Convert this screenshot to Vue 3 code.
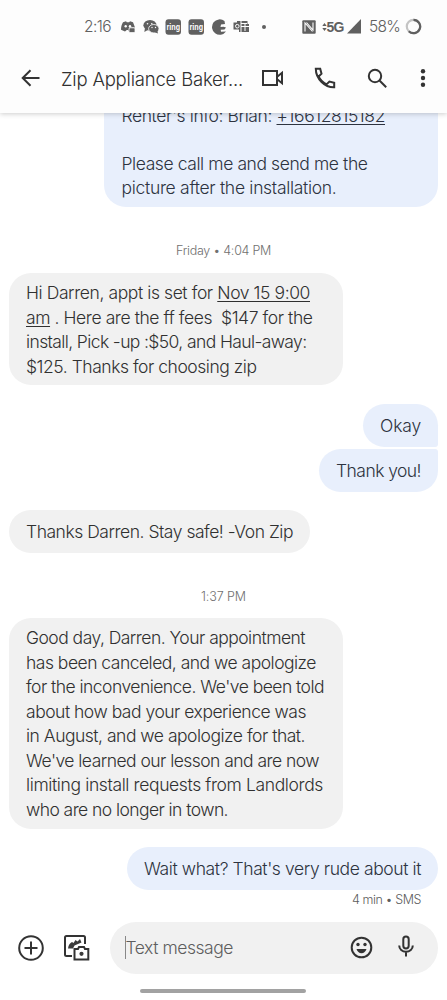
<script setup>
// Sets the tracking of a line so that it spans the given width in pixels.
const vFit = {
  mounted(el, { value }) {
    el.style.letterSpacing = '0px'
    const natural = el.getBoundingClientRect().width
    const count = el.textContent.length
    el.style.letterSpacing = (value - natural) / count + 'px'
  },
}

const appointment = [
  { w: 284, parts: [{ t: 'Hi Darren, appt is set for ' }, { t: 'Nov 15 9:00', u: true }] },
  { w: 286.5, parts: [{ t: 'am', u: true }, { t: ' . Here are the ff fees\u00a0 $147 for the' }] },
  { w: 280.5, parts: [{ t: 'install, Pick -up :$50, and Haul-away:' }] },
  { w: 230.5, parts: [{ t: '$125. Thanks for choosing zip' }] },
]

const cancellation = [
  { w: 279, t: 'Good day, Darren. Your appointment' },
  { w: 290, t: 'has been canceled, and we apologize' },
  { w: 298, t: "for the inconvenience. We've been told" },
  { w: 280, t: 'about how bad your experience was' },
  { w: 279, t: 'in August, and we apologize for that.' },
  { w: 293, t: "We've learned our lesson and are now" },
  { w: 297, t: 'limiting install requests from Landlords' },
  { w: 202, t: 'who are no longer in town.' },
]
</script>

<template>
  <div class="phone">
    <header class="top">
      <div class="status">
        <span v-fit="27" class="clock">2:16</span>
        <svg class="apps" width="132" height="18" viewBox="0 0 132 18">
          <g fill="#606060">
            <path d="M3 4.200 6 3.300l.8 1h2.400l.8-1 3 .9 2 5.200H9v4l-.8-1.500H6.800L5 13.500l-4-1.700c0-3 .6-5.400 2-7.600Z" />
            <circle cx="5.700" cy="8.200" r="1.200" fill="#fdfdfd" /><circle cx="10" cy="8.200" r="1.200" fill="#fdfdfd" />
            <rect x="9" y="9.800" width="6" height="4.800" rx="1" stroke="#fdfdfd" stroke-width=".8" />
            <ellipse cx="30" cy="7.300" rx="6.600" ry="5.400" /><path d="m25 10-.7 4 3.500-2Z" />
            <ellipse cx="33.800" cy="10.700" rx="5.200" ry="4.200" stroke="#fdfdfd" stroke-width=".8" /><path d="m34 14 4 1.500-.7-3Z" />
            <g fill="#fdfdfd"><circle cx="27.500" cy="5.700" r=".8" /><circle cx="31.800" cy="5.700" r=".8" /><circle cx="32" cy="9.500" r=".7" /><circle cx="35.500" cy="9.500" r=".7" /></g>
            <rect x="45.500" y="1.300" width="15.500" height="15.500" rx="3" />
            <rect x="68.500" y="1.300" width="15.500" height="15.500" rx="3" />
            <path d="M104.500 3A7.700 7.700 0 1 0 106 13.500l-5 .3-.3-2 3.800-.3 1.500-2-2.500-.8-3 .3.500-2.500 4-.5Z" />
            <path d="M117 3h10.500v3h1.500V14H119v-2.500h-5.500V4.500H117Z" />
          </g>
          <g fill="none" stroke="#fdfdfd" stroke-width="1"><circle cx="117.300" cy="8.200" r="1.800" /><path d="M121 3v11M121 8.500h8M125 5v8M121 5.500h6" /></g>
          <text x="46.500" y="11.500" class="ring" textLength="13.500" lengthAdjust="spacingAndGlyphs">ring</text>
          <text x="69.500" y="11.500" class="ring" textLength="13.500" lengthAdjust="spacingAndGlyphs">ring</text>
        </svg>
        <i class="dot"></i>
        <svg class="nfc" width="14" height="14" viewBox="0 0 14 14"><rect x=".3" y=".3" width="13.400" height="13.400" rx="1" fill="#606060" /><path d="M3 11.500V3l7.500 8.500M4.500 2.500 11 10V2.500" fill="none" stroke="#fdfdfd" stroke-width="1.100" /></svg>
        <svg class="updown" width="5" height="8" viewBox="0 0 5 8"><path d="M.3 3 2.500 0l2.200 3ZM.3 5l2.200 3 2.200-3Z" fill="#606060" /></svg>
        <b v-fit="17" class="net">5G</b>
        <svg class="signal" width="15" height="15" viewBox="0 0 15 15"><path d="M0 14.500 14 0v14.500Z" fill="#606060" /></svg>
        <span v-fit="31" class="battery">58%</span>
        <svg class="gauge" width="17" height="17" viewBox="0 0 17 17" fill="none" stroke-width="2.200"><circle cx="8.500" cy="8.500" r="6.700" stroke="#c4c4c4" /><path d="M8.500 1.800a6.700 6.700 0 1 1-4.700 11.500" stroke="#606060" /></svg>
      </div>
      <div class="bar">
        <svg class="back" width="20" height="18" viewBox="0 0 20 18"><path d="M18.500 9H2M9.500 1.200 1.700 9l7.800 7.800" /></svg>
        <h1 v-fit="182">Zip Appliance Baker...</h1>
        <svg class="video" width="24" height="18" viewBox="0 0 24 18"><path d="M2 2h14v14H2ZM16.500 7.500 21 3.800v10.400l-4.500-3.700" /></svg>
        <svg class="call" width="22" height="22" viewBox="0 0 22 22"><path d="M1.800 1.800h4.400l1.300 4.900-2.900 2.800c1.700 3.600 4.300 6.200 7.900 7.900l2.900-2.900 4.800 1.300v4.400C11 20.500 1.800 12 1.800 1.800Z" /></svg>
        <svg class="search" width="21" height="21" viewBox="0 0 21 21"><circle cx="8" cy="8" r="6.200" /><path d="m12.500 12.500 6.700 6.700" /></svg>
        <svg class="more" width="6" height="20" viewBox="0 0 6 20"><g fill="#333" stroke="none"><circle cx="3" cy="3.200" r="2.200" /><circle cx="3" cy="10" r="2.200" /><circle cx="3" cy="16.800" r="2.200" /></g></svg>
      </div>
    </header>

    <main class="thread">
      <div class="bubble sent first">
        <div class="line"><span v-fit="263.500">Renter's info: Brian: <u>+16612815182</u></span></div>
        <div class="line gap"></div>
        <div class="line"><span v-fit="246">Please call me and send me the</span></div>
        <div class="line"><span v-fit="215">picture after the installation.</span></div>
      </div>

      <div class="stamp day"><span v-fit="95">Friday • 4:04 PM</span></div>

      <div class="bubble long appt">
        <div v-for="(l, i) in appointment" :key="i" class="line">
          <span v-fit="l.w"><template v-for="(p, j) in l.parts" :key="j"><u v-if="p.u">{{ p.t }}</u><template v-else>{{ p.t }}</template></template></span>
        </div>
      </div>

      <div class="bubble sent okay"><div class="line"><span v-fit="41">Okay</span></div></div>
      <div class="bubble sent thank"><div class="line"><span v-fit="85">Thank you!</span></div></div>
      <div class="bubble short"><div class="line"><span v-fit="267">Thanks Darren. Stay safe! -Von Zip</span></div></div>

      <div class="stamp time"><span v-fit="45">1:37 PM</span></div>

      <div class="bubble long cancel">
        <div v-for="(l, i) in cancellation" :key="i" class="line"><span v-fit="l.w">{{ l.t }}</span></div>
      </div>

      <div class="bubble sent last"><div class="line"><span v-fit="277">Wait what? That's very rude about it</span></div></div>
      <div class="receipt"><span v-fit="69">4 min • SMS</span></div>
    </main>

    <footer class="composer">
      <svg class="plus" width="26" height="26" viewBox="0 0 26 26"><circle cx="13" cy="13" r="11.800" /><path d="M13 6.500v13M6.500 13h13" /></svg>
      <svg class="gallery" width="27" height="27" viewBox="0 0 27 27">
        <path d="M9 22H3.500Q2 22 2 20.500v-17Q2 2 3.500 2h17Q22 2 22 3.500V10" />
        <path d="M5 14.500c.5-4 2-5.500 4-6.500l1.500 1 2-3 2 1.500L17 5l1.500 3.500L15 10l-3.500 1.500-1.500 3Z" fill="#3b3b3b" stroke="none" />
        <path d="M11.500 15h3.500l1-2h5l1 2h3.300v10.500H11.500Z" fill="#fff" />
        <circle cx="18.500" cy="19.800" r="2.100" fill="#3b3b3b" stroke="none" />
      </svg>
      <div class="field">
        <i class="caret"></i>
        <span v-fit="107.500" class="hint">Text message</span>
        <svg class="smile" width="23" height="23" viewBox="0 0 23 23"><circle cx="11.500" cy="11.500" r="9.800" /><g fill="#333" stroke="none"><circle cx="8" cy="8.500" r="1.700" /><circle cx="15" cy="8.500" r="1.700" /><path d="M6.500 13h10c-.8 2.700-2.600 4.200-5 4.200s-4.200-1.500-5-4.200Z" /></g></svg>
        <svg class="mic" width="16" height="22" viewBox="0 0 16 22"><rect x="5.300" y="1.500" width="5.400" height="12" rx="2.700" /><path d="M1.200 10.500a6.800 6.300 0 0 0 13.600 0M8 17v4.500" /></svg>
      </div>
    </footer>
    <i class="home"></i>
  </div>
</template>

<style>
body {
  background: #fff;
}
</style>

<style scoped>
.phone {
  width: 447px;
  height: 1000px;
  display: flex;
  flex-direction: column;
  align-items: stretch;
  overflow: hidden;
  background: #fff;
  color: #303030;
  font-family: Inter, 'Liberation Sans', Arial, sans-serif;
  font-weight: 300;
  box-sizing: border-box;
}
svg {
  display: block;
  flex: none;
}
span,
b,
h1 {
  white-space: pre;
  flex: none;
}
.top {
  height: 113px;
  flex: none;
  position: relative;
  z-index: 1;
  background: #fdfdfd;
  box-shadow: 0 1px 5px rgba(0, 0, 0, 0.2);
}
.status {
  height: 53px;
  padding-left: 84px;
  display: flex;
  align-items: center;
  color: #606060;
}
.clock,
.battery {
  font-size: 15.500px;
}
.apps {
  margin-left: 9px;
}
.ring {
  font: bold 8.500px 'Liberation Sans', sans-serif;
  fill: #fff;
}
.dot {
  width: 4px;
  height: 4px;
  margin-left: 10px;
  border-radius: 50%;
  background: #606060;
}
.nfc {
  margin-left: 35.500px;
}
.updown {
  margin-left: 6px;
}
.net {
  font: bold 14px 'Liberation Sans', sans-serif;
  margin-top: 1px;
}
.signal {
  margin-left: 3.500px;
}
.battery {
  margin-left: 7px;
}
.gauge {
  margin-left: 5px;
}
.bar {
  height: 50px;
  padding-left: 21px;
  display: flex;
  align-items: center;
}
.bar svg,
.composer svg {
  fill: none;
  stroke: #333;
  stroke-width: 2;
}
.bar h1 {
  width: max-content;
  margin: 2px 0 0 20px;
  font-size: 18.500px;
  font-weight: 300;
}
.bar .video {
  margin-left: 18px;
}
.call {
  margin-left: 29px;
}
.search {
  margin-left: 31px;
}
.more {
  margin-left: 32px;
}
.thread {
  height: 797px;
  flex: none;
  display: flex;
  flex-direction: column;
  align-items: flex-start;
  padding: 0 9px;
}
.bubble {
  flex: none;
  box-sizing: border-box;
  height: 43px;
  padding: 10px 17px 0;
  border-radius: 22px;
  background: #f1f1f1;
  font-size: 17.500px;
}
.line {
  height: 24.500px;
  line-height: 24.500px;
  white-space: nowrap;
}
u {
  text-decoration-thickness: 1px;
  text-underline-offset: 2px;
}
.sent {
  align-self: flex-end;
  background: #e8effc;
  color: #2d3340;
}
.first {
  width: 334px;
  height: 105px;
  margin-top: -11px;
  padding: 1.500px 17.500px 0;
  border-top-left-radius: 0;
  border-top-right-radius: 0;
}
.line.gap {
  height: 23.500px;
}
.stamp {
  align-self: center;
  height: 16px;
  line-height: 16px;
  font-size: 12.500px;
  color: #707070;
}
.day {
  margin-top: 36px;
}
.long {
  width: 334px;
  padding-top: 8px;
}
.appt {
  height: 112px;
  margin-top: 14px;
}
.okay {
  margin-top: 19px;
  border-bottom-right-radius: 3px;
}
.thank {
  margin-top: 2px;
  border-top-right-radius: 3px;
}
.short {
  margin-top: 18px;
}
.time {
  margin-top: 36px;
}
.cancel {
  height: 211px;
  margin-top: 13px;
}
.last {
  margin-top: 18px;
}
.receipt {
  align-self: flex-end;
  margin: 2px 17px 0 0;
  height: 16px;
  line-height: 16px;
  font-size: 12.500px;
  color: #5c5c5c;
}
.composer {
  flex: none;
  height: 73px;
  margin-top: 1px;
  display: flex;
  align-items: center;
  padding-left: 18px;
}
.gallery {
  margin-left: 19px;
}
.field {
  width: 328px;
  height: 52px;
  flex: none;
  margin-left: 20px;
  box-sizing: border-box;
  padding-left: 14.500px;
  border-radius: 26px;
  background: #f1f1f1;
  display: flex;
  align-items: center;
}
.caret {
  width: 1px;
  height: 23px;
  background: #888;
}
.hint {
  font-size: 17.500px;
  color: #5e5e5e;
}
.smile {
  margin-left: 117px;
}
.mic {
  margin-left: 25px;
  margin-top: -3px;
}
.home {
  flex: none;
  width: 166px;
  height: 4px;
  margin: 5px 0 0 140px;
  border-radius: 2px;
  background: #a2a2a2;
}
</style>
